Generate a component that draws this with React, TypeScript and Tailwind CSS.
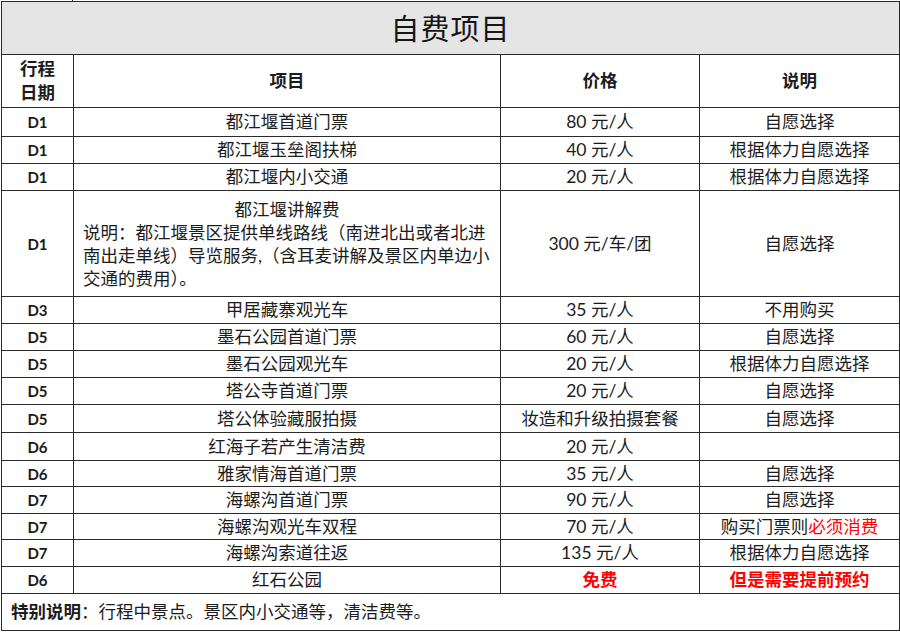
import React from "react";

type Row = {
  day: string;
  item: React.ReactNode;
  price: React.ReactNode;
  note: React.ReactNode;
  h?: string;
};

const rows: Row[] = [
  { day: "D1", item: "都江堰首道门票", price: "80 元/人", note: "自愿选择", h: "h-[29px]" },
  { day: "D1", item: "都江堰玉垒阁扶梯", price: "40 元/人", note: "根据体力自愿选择" },
  { day: "D1", item: "都江堰内小交通", price: "20 元/人", note: "根据体力自愿选择" },
  {
    day: "D1",
    item: (
      <div className="leading-[23px] text-left pl-[9px]">
        <div className="text-center pr-[9px]">都江堰讲解费</div>
        <div className="whitespace-nowrap">说明：都江堰景区提供单线路线（南进北出或者北进</div>
        <div className="whitespace-nowrap">南出走单线）导览服务,（含耳麦讲解及景区内单边小</div>
        <div className="whitespace-nowrap">交通的费用）。</div>
      </div>
    ),
    price: "300 元/车/团",
    note: "自愿选择",
    h: "h-[106px]",
  },
  { day: "D3", item: "甲居藏寨观光车", price: "35 元/人", note: "不用购买" },
  { day: "D5", item: "墨石公园首道门票", price: "60 元/人", note: "自愿选择" },
  { day: "D5", item: "墨石公园观光车", price: "20 元/人", note: "根据体力自愿选择" },
  { day: "D5", item: "塔公寺首道门票", price: "20 元/人", note: "自愿选择" },
  { day: "D5", item: "塔公体验藏服拍摄", price: "妆造和升级拍摄套餐", note: "自愿选择", h: "h-[28px]" },
  { day: "D6", item: "红海子若产生清洁费", price: "20 元/人", note: "", h: "h-[28px]" },
  { day: "D6", item: "雅家情海首道门票", price: "35 元/人", note: "自愿选择", h: "h-[26px]" },
  { day: "D7", item: "海螺沟首道门票", price: "90 元/人", note: "自愿选择" },
  {
    day: "D7",
    item: "海螺沟观光车双程",
    price: "70 元/人",
    note: (
      <>
        购买门票则<span className="text-[#ff0000]">必须消费</span>
      </>
    ),
    h: "h-[26px]",
  },
  { day: "D7", item: "海螺沟索道往返", price: "135 元/人", note: "根据体力自愿选择" },
  {
    day: "D6",
    item: "红石公园",
    price: <span className="font-bold text-[#ff0000]">免费</span>,
    note: <span className="font-bold text-[#ff0000]">但是需要提前预约</span>,
  },
];

const cell = "border-[1.5px] border-[#2a2a2a] text-center align-middle p-0";

export default function App() {
  return (
    <div
      className="w-[900px] h-[633px] bg-white text-[#1c1c1c] text-[17.5px]"
      style={{ fontFamily: 'Lato, "Noto Sans CJK SC", sans-serif' }}
    >
      {/* stub of the row above */}
      <div className="flex h-[1px]">
        <div className="w-[73px] border-r-[1.5px] border-[#2a2a2a]" />
      </div>

      <table className="ml-[1px] w-[898px] table-fixed border-collapse">
        <colgroup>
          <col className="w-[72px]" />
          <col className="w-[427px]" />
          <col className="w-[199px]" />
          <col className="w-[200px]" />
        </colgroup>
        <tbody>
          <tr className="h-[53px] bg-[#e5e5e5]">
            <td colSpan={4} className={cell}>
              <span
                className="text-[29px] text-[#151515] tracking-[1px]"
                style={{ fontFamily: '"Noto Sans CJK SC", sans-serif' }}
              >
                自费项目
              </span>
            </td>
          </tr>
          <tr className="h-[53px] font-bold">
            <td className={`${cell} leading-[24px]`}>
              行程
              <br />
              日期
            </td>
            <td className={cell}>项目</td>
            <td className={cell}>价格</td>
            <td className={cell}>说明</td>
          </tr>

          {rows.map((r, i) => (
            <tr key={i} className={`${r.h ?? "h-[27px]"} leading-[22px]`}>
              <td className={`${cell} font-bold text-[15px] text-[#1a1a1a]`}>{r.day}</td>
              <td className={cell}>{r.item}</td>
              <td className={cell}>{r.price}</td>
              <td className={cell}>{r.note}</td>
            </tr>
          ))}

          <tr className="h-[37px]">
            <td colSpan={4} className={`${cell} text-left pl-[9px]`}>
              <span className="font-bold">特别说明</span>：行程中景点。景区内小交通等，清洁费等。
            </td>
          </tr>
        </tbody>
      </table>
    </div>
  );
}
